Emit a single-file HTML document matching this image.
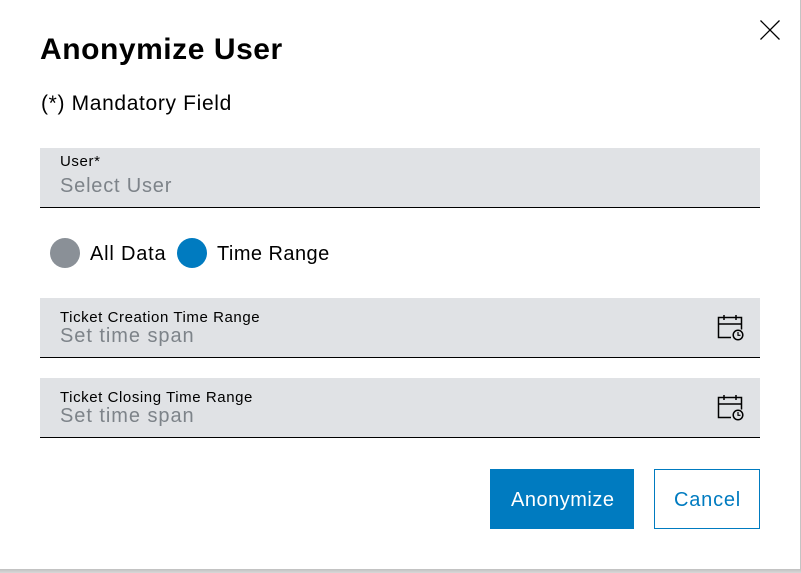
<!DOCTYPE html>
<html>
<head>
<meta charset="utf-8">
<style>
html,body{margin:0;padding:0;width:801px;height:573px;overflow:hidden;background:#c4c4c4;}
body{position:relative;font-family:"Liberation Sans",sans-serif;color:#000;}
#bg{position:absolute;left:0;top:569px;width:801px;height:4px;background:linear-gradient(#c0c0c0,#d8d8d8);}
#dlg{position:absolute;left:0;top:0;width:800px;height:569px;background:#fff;}
.t{position:absolute;white-space:nowrap;line-height:1;}
.f{position:absolute;left:40px;width:720px;background:#e0e2e5;border-bottom:1px solid #000;box-sizing:border-box;}
.c{position:absolute;top:238px;width:30px;height:30px;border-radius:50%;}
svg{position:absolute;}
</style>
</head>
<body>
<div id="bg"></div>
<div id="dlg"></div>
<svg style="left:759px;top:19px" width="22" height="22" viewBox="0 0 22 22"><path d="M1.500 1.500L20.500 20.500M20.500 1.500L1.500 20.500" stroke="#000" stroke-width="1.300" fill="none"/></svg>
<div class="t" style="left:40px;top:35px;font-size:30px;font-weight:bold;letter-spacing:.55px">Anonymize User</div>
<div class="t" style="left:41px;top:93px;font-size:21px;letter-spacing:.65px">(*) Mandatory Field</div>

<div class="f" style="top:148px;height:60px"></div>
<div class="t" style="left:60px;top:154px;font-size:15px;letter-spacing:.6px">User*</div>
<div class="t" style="left:60px;top:176px;font-size:20px;color:#7d8389;letter-spacing:.8px">Select User</div>

<div class="c" style="left:50px;background:#8a9097"></div>
<div class="t" style="left:90px;top:244px;font-size:20px;letter-spacing:.8px">All Data</div>
<div class="c" style="left:177px;background:#007bc0"></div>
<div class="t" style="left:217px;top:244px;font-size:20px;letter-spacing:.45px">Time Range</div>

<div class="f" style="top:298px;height:60px"></div>
<div class="t" style="left:60px;top:310px;font-size:15px;letter-spacing:.57px">Ticket Creation Time Range</div>
<div class="t" style="left:60px;top:326px;font-size:20px;color:#7d8389;letter-spacing:.95px">Set time span</div>
<svg style="left:716px;top:314px" width="28" height="28" viewBox="0 0 28 28"><path d="M15 23.500H2.500V3.500H25.500V15.500M2.500 10H25.500M8 1V6M20 1V6" stroke="#000" stroke-width="1.500" fill="none"/><circle cx="22" cy="21" r="4.800" fill="none" stroke="#000" stroke-width="1.500"/><path d="M22 18V21.300H24.500" stroke="#000" stroke-width="1.200" fill="none"/></svg>

<div class="f" style="top:378px;height:60px"></div>
<div class="t" style="left:60px;top:390px;font-size:15px;letter-spacing:.57px">Ticket Closing Time Range</div>
<div class="t" style="left:60px;top:406px;font-size:20px;color:#7d8389;letter-spacing:.95px">Set time span</div>
<svg style="left:716px;top:394px" width="28" height="28" viewBox="0 0 28 28"><path d="M15 23.500H2.500V3.500H25.500V15.500M2.500 10H25.500M8 1V6M20 1V6" stroke="#000" stroke-width="1.500" fill="none"/><circle cx="22" cy="21" r="4.800" fill="none" stroke="#000" stroke-width="1.500"/><path d="M22 18V21.300H24.500" stroke="#000" stroke-width="1.200" fill="none"/></svg>

<div style="position:absolute;left:490px;top:469px;width:144px;height:60px;background:#007bc0"></div>
<div class="t" style="left:511px;top:490px;font-size:20px;color:#fff;letter-spacing:.5px">Anonymize</div>
<div style="position:absolute;left:654px;top:469px;width:106px;height:60px;box-sizing:border-box;border:1px solid #007bc0;background:#fff"></div>
<div class="t" style="left:674px;top:490px;font-size:20px;color:#007bc0;letter-spacing:.8px">Cancel</div>
</body>
</html>
